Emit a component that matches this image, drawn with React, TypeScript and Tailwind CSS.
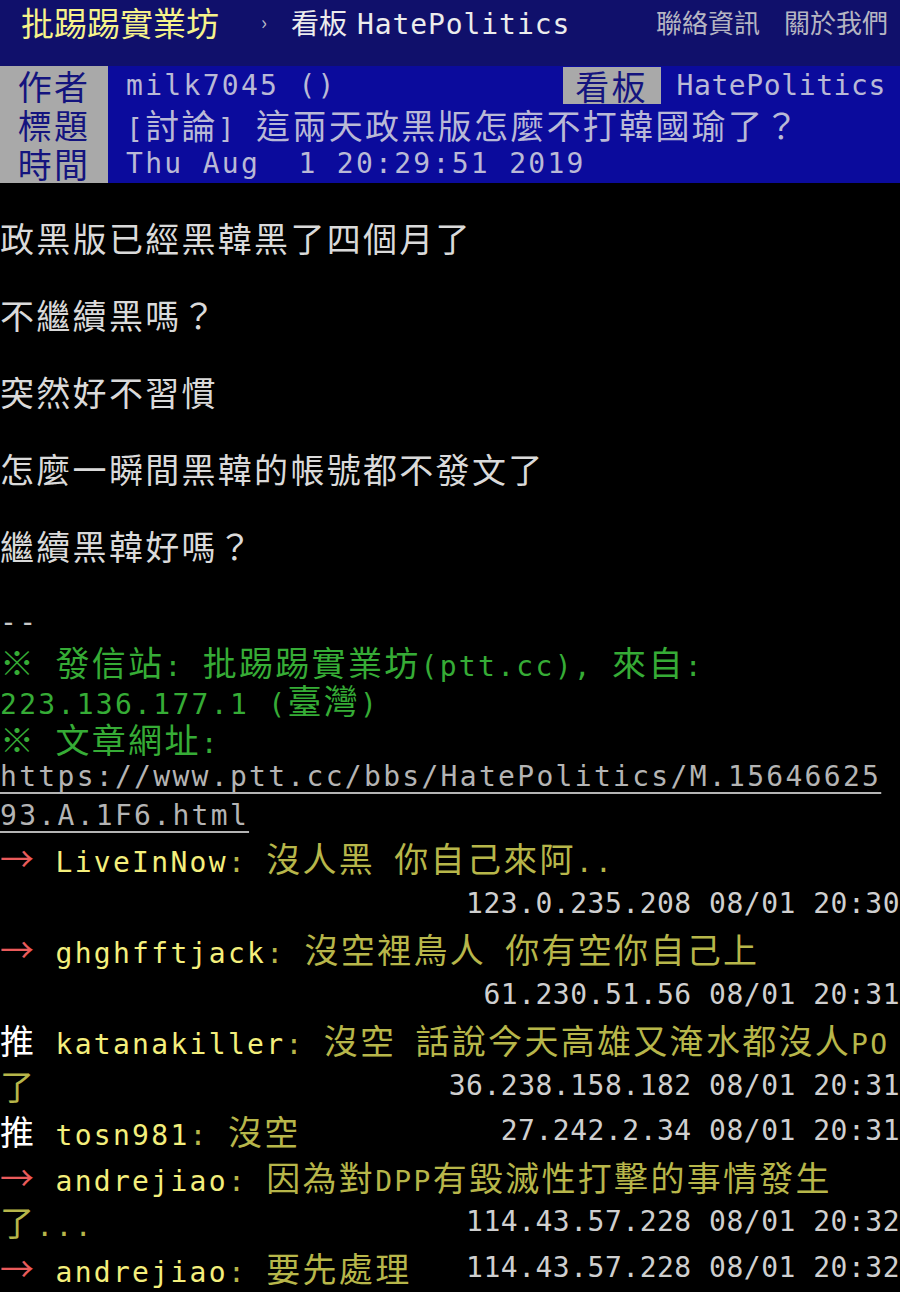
import React from "react";

const MONO = "font-['DejaVu_Sans_Mono','Noto_Sans_CJK_TC',monospace]";

// full-width characters get the CJK face, the rest the mono face
const isWide = (ch: string) =>
    /[\u2190-\u21FF\u203B\u2E80-\u9FFF\uF900-\uFAFF\uFE30-\uFE4F\uFF00-\uFF60\uFFE0-\uFFE6]/.test(ch);

function splitRuns(text: string) {
    const out: { wide: boolean; s: string }[] = [];
    for (const ch of text) {
        const wide = isWide(ch);
        const last = out[out.length - 1];
        if (last && last.wide === wide) last.s += ch;
        else out.push({ wide, s: ch });
    }
    return out;
}

const T = ({ text }: { text: string }) => (
    <>
        {splitRuns(text).map((r, i) =>
            r.wide ? (
                <span key={i} className="font-['Noto_Sans_CJK_TC',sans-serif] text-[34px]">{r.s}</span>
            ) : (
                <span key={i} className={MONO + " text-[28px]"}>{r.s}</span>
            )
        )}
    </>
);

const Line = ({ text, className = "" }: { text: string; className?: string }) => (
    <div className={"h-[38.5px] leading-[38.5px] whitespace-pre tracking-[2.3px] text-[28px] " + MONO + " " + className}>
        <T text={text} />
    </div>
);

type Push = {
    tag: string;
    user: string;
    content: string;
    ip?: string;
};

const PushTag = ({ tag }: { tag: string }) => (
    <span className={tag === "推" ? "text-white" : "text-[#ea5b5b]"}>
        <T text={tag + " "} />
    </span>
);

const IpTime = ({ text }: { text: string }) => (
    <span className={"ml-auto text-[28px] tracking-[0.5px] text-[#cfcfcf] " + MONO}>{text}</span>
);

const Row = ({ children }: { children: React.ReactNode }) => (
    <div className={"flex h-[45.5px] leading-[45.5px] whitespace-pre tracking-[2.3px] text-[28px] " + MONO}>
        {children}
    </div>
);

const PushLine = ({ p }: { p: Push }) => (
    <Row>
        <span>
            <PushTag tag={p.tag} />
            <span className="text-[#f4ef7c]"><T text={p.user} /></span>
            <span className="text-[#b7b64a]"><T text={": " + p.content} /></span>
        </span>
        {p.ip && <IpTime text={p.ip} />}
    </Row>
);

const ContLine = ({ text, ip }: { text?: string; ip: string }) => (
    <Row>
        {text && <span className="text-[#b7b64a]"><T text={text} /></span>}
        <IpTime text={ip} />
    </Row>
);

const MetaRow = ({ label, value, right }: { label: string; value: string; right?: [string, string] }) => (
    <div className={"flex h-[39px] leading-[39px] whitespace-pre tracking-[2.3px] text-[28px] " + MONO}>
        <div className="w-[108px] shrink-0 bg-[#a9a9a9] text-center text-[#14147e]">
            <T text={label} />
        </div>
        <div className="flex-1 bg-[#0b0b9c] pl-[18px] text-[#b9b9d6]">
            <T text={value} />
        </div>
        {right && (
            <>
                <div className="w-[98px] bg-[#0b0b9c] py-[1px]">
                    <div className="h-full bg-[#a9a9a9] text-center text-[#14147e] leading-[37px]">
                        <T text={right[0]} />
                    </div>
                </div>
                <div className="bg-[#0b0b9c] pl-[16px] pr-[14px] text-[#b9b9d6] tracking-[0.6px]">
                    <T text={right[1]} />
                </div>
            </>
        )}
    </div>
);

const body = ["政黑版已經黑韓黑了四個月了", "不繼續黑嗎？", "突然好不習慣", "怎麼一瞬間黑韓的帳號都不發文了", "繼續黑韓好嗎？"];

const App = () => {
    return (
        <div className="w-[900px] h-[1292px] overflow-hidden bg-black">
            {/* top bar */}
            <div className="flex h-[66px] items-start bg-[#10106b] pl-[21px] pr-[12px] leading-[44px]">
                <span className="font-['Noto_Sans_CJK_TC',sans-serif] text-[33px] text-[#f6f38a]">批踢踢實業坊</span>
                <span className="ml-[42px] font-['Noto_Sans_CJK_TC',sans-serif] text-[20px] text-[#b8b8c8]">›</span>
                <span className="ml-[24px] text-[#ececec]">
                    <span className="font-['Noto_Sans_CJK_TC',sans-serif] text-[28px]">看板</span>
                    <span className={MONO + " ml-[10px] text-[28px] tracking-[0.9px]"}>HatePolitics</span>
                </span>
                <span className="ml-auto font-['Noto_Sans_CJK_TC',sans-serif] text-[26px] text-[#b5b5c2]">聯絡資訊</span>
                <span className="ml-[24px] font-['Noto_Sans_CJK_TC',sans-serif] text-[26px] text-[#b5b5c2]">關於我們</span>
            </div>

            {/* article meta */}
            <MetaRow label="作者" value="milk7045 ()" right={["看板", "HatePolitics"]} />
            <MetaRow label="標題" value="[討論] 這兩天政黑版怎麼不打韓國瑜了？" />
            <MetaRow label="時間" value="Thu Aug  1 20:29:51 2019" />

            {/* content */}
            <div className="text-[#dadada]">
                <div className="h-[36px]" />
                {body.map((b, i) => (
                    <React.Fragment key={i}>
                        <Line text={b} />
                        <Line text="" />
                    </React.Fragment>
                ))}
                <Line text="--" className="text-[#c8c8c8]" />
                <div className="text-[#36ac36]">
                    <Line text="※ 發信站: 批踢踢實業坊(ptt.cc), 來自:" />
                    <Line text="223.136.177.1 (臺灣)" />
                    <Line text="※ 文章網址:" />
                </div>
                <div className="text-[#b4b4b4]">
                    <Line text="https://www.ptt.cc/bbs/HatePolitics/M.15646625" className="underline decoration-2 underline-offset-[6px]" />
                    <Line text="93.A.1F6.html" className="underline decoration-2 underline-offset-[6px]" />
                </div>

                {/* pushes */}
                <PushLine p={{ tag: "→", user: "LiveInNow", content: "沒人黑 你自己來阿.." }} />
                <ContLine ip="123.0.235.208 08/01 20:30" />
                <PushLine p={{ tag: "→", user: "ghghfftjack", content: "沒空裡鳥人 你有空你自己上" }} />
                <ContLine ip="61.230.51.56 08/01 20:31" />
                <PushLine p={{ tag: "推", user: "katanakiller", content: "沒空 話說今天高雄又淹水都沒人PO" }} />
                <ContLine text="了" ip="36.238.158.182 08/01 20:31" />
                <PushLine p={{ tag: "推", user: "tosn981", content: "沒空", ip: "27.242.2.34 08/01 20:31" }} />
                <PushLine p={{ tag: "→", user: "andrejiao", content: "因為對DPP有毀滅性打擊的事情發生" }} />
                <ContLine text="了..." ip="114.43.57.228 08/01 20:32" />
                <PushLine p={{ tag: "→", user: "andrejiao", content: "要先處理", ip: "114.43.57.228 08/01 20:32" }} />
            </div>
        </div>
    );
};

export default App;
